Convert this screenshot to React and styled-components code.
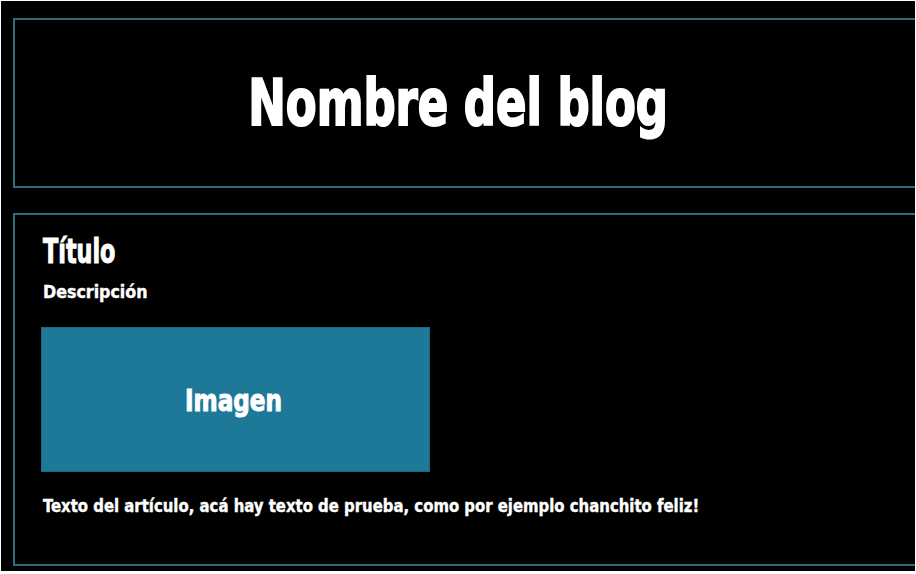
import React from 'react';
import styled, { createGlobalStyle } from 'styled-components';

const Global = createGlobalStyle`
  html {
    background: #ffffff;
  }
  body {
    margin: 1px 1px 3px 1px;
    background: #000000;
    height: 570px;
    overflow: hidden;
    font-family: Impact, "DejaVu Sans Condensed", "DejaVu Sans", sans-serif;
    font-weight: 700;
    color: #ffffff;
  }
  * {
    box-sizing: border-box;
  }
`;

const Page = styled.div`
  display: flex;
  flex-direction: column;
  gap: 25px;
  padding: 17px 0 0 12px;
`;

const Box = styled.section`
  border: 2px solid #2c6e7f;
  margin-right: -30px;
`;

const Header = styled(Box)`
  height: 170px;
  display: flex;
  align-items: center;
  justify-content: center;
  padding-right: 42px;
`;

/* condensed heavy look: the display face is squeezed horizontally */
const Squeezed = styled.span`
  display: inline-block;
  white-space: nowrap;
  transform: scaleX(${p => p.$sx});
  transform-origin: ${p => (p.$center ? 'center' : 'left')} center;
  -webkit-text-stroke: ${p => p.$stroke || 0}px #ffffff;
`;

const BlogName = styled.h1`
  margin: 0;
  font-size: 64px;
  line-height: 1;
  font-weight: 700;
`;

const Article = styled(Box)`
  height: 353px;
  padding: 16px 0 0 28px;
  display: flex;
  flex-direction: column;
  align-items: flex-start;
`;

const Title = styled.h2`
  margin: 0;
  font-size: 34px;
  line-height: 40px;
  font-weight: 700;
`;

const Description = styled.p`
  margin: 11px 0 0;
  font-size: 18px;
  line-height: 20px;
`;

const Picture = styled.div`
  margin: 25px 0 0 -2px;
  width: 389px;
  height: 145px;
  background: #1e7898;
  border: 1px solid #1a6883;
  display: flex;
  align-items: center;
  justify-content: center;
  font-size: 31px;
  padding-right: 5px;
`;

const Body = styled.p`
  margin: 24px 0 0;
  font-size: 18px;
  line-height: 20px;
`;

export default function App() {
  return (
    <>
      <Global />
      <Page>
        <Header>
          <BlogName>
            <Squeezed $sx={0.78} $stroke={2} $center>Nombre del blog</Squeezed>
          </BlogName>
        </Header>
        <Article>
          <Title>
            <Squeezed $sx={0.73} $stroke={1}>Título</Squeezed>
          </Title>
          <Description>
            <Squeezed $sx={0.98} $stroke={0.4}>Descripción</Squeezed>
          </Description>
          <Picture>
            <Squeezed $sx={0.83} $stroke={1} $center>Imagen</Squeezed>
          </Picture>
          <Body>
            <Squeezed $sx={0.92} $stroke={0.4}>
              Texto del artículo, acá hay texto de prueba, como por ejemplo chanchito feliz!
            </Squeezed>
          </Body>
        </Article>
      </Page>
    </>
  );
}
